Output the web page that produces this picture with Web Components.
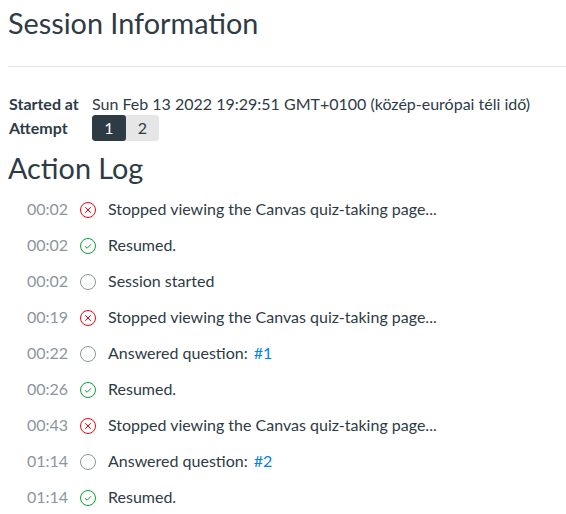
<!DOCTYPE html>
<html><head><meta charset="utf-8">
<style>
html,body{margin:0;background:#fff;overflow:hidden}
body{font-family:Lato,sans-serif;color:#2d3b45;height:514px}
</style></head><body>
<session-page>
<session-info slot="info" started="Sun Feb 13 2022 19:29:51 GMT+0100 (közép-európai téli idő)"></session-info>
<log-row time="00:02" kind="stop">Stopped viewing the Canvas quiz-taking page...</log-row>
<log-row time="00:02" kind="ok">Resumed.</log-row>
<log-row time="00:02" kind="none">Session started</log-row>
<log-row time="00:19" kind="stop">Stopped viewing the Canvas quiz-taking page...</log-row>
<log-row time="00:22" kind="none">Answered question: <a>#1</a></log-row>
<log-row time="00:26" kind="ok">Resumed.</log-row>
<log-row time="00:43" kind="stop">Stopped viewing the Canvas quiz-taking page...</log-row>
<log-row time="01:14" kind="none">Answered question: <a>#2</a></log-row>
<log-row time="01:14" kind="ok">Resumed.</log-row>
</session-page>
<script>
function def(name,html,init){customElements.define(name,class extends HTMLElement{connectedCallback(){if(this.shadowRoot)return;const r=this.attachShadow({mode:'open'});r.innerHTML=html;init&&init(this,r);}})}
def('session-page',`<style>
:host{display:block;padding-left:8px}
h1{margin:0;font:400 28.8px/34px Lato,sans-serif;padding-top:6px}
hr{border:0;height:1px;background:#dfe2e4;margin:26px 0 0}
h2{margin:0;font:400 28.8px/34px Lato,sans-serif;padding-top:10px}
.log{display:flex;flex-direction:column;padding-top:6px}
</style><h1>Session Information</h1><hr><slot name="info"></slot><h2>Action Log</h2><div class="log"><slot></slot></div>`);
def('session-info',`<style>
:host{display:grid;grid-template-columns:83px 1fr;padding-top:26px;font-size:16px;line-height:22px;margin-left:1px}
b{font-weight:700}
.tabs{display:flex;height:26px;width:67px;border-radius:3px;overflow:hidden;background:#e6e6e6;line-height:26px;text-align:center}
.tabs span{flex:1}
.tabs .on{flex:0 0 34px;background:#2d3b45;color:#fff;border-radius:3px}
.a{line-height:26px}
</style><b>Started at</b><span id="s"></span><b class="a">Attempt</b><div class="tabs"><span class="on">1</span><span>2</span></div>`,
(h,r)=>{r.getElementById('s').textContent=h.getAttribute('started')});
const icons={
stop:'<circle cx="9" cy="9" r="7.5" stroke="#ee0612"/><path d="M6.2 6.2l5.6 5.6M11.8 6.2l-5.6 5.6" stroke="#ee0612"/>',
ok:'<circle cx="9" cy="9" r="7.5" stroke="#0b9e3c"/><path d="M6 9.3l2.1 2 3.9-4" stroke="#0b9e3c"/>',
none:'<circle cx="9" cy="9" r="7.5" stroke="#8b969e"/>'};
def('log-row',`<style>
:host{display:flex;align-items:center;height:36px;font-size:16px;line-height:20px}
.t{width:60px;text-align:right;color:#8b969e;flex:none}
svg{flex:none;margin:1px 11px 0 11px;display:block;width:18px;height:18px;fill:none;stroke-width:1}
::slotted(a){color:#0081ed;margin-left:2px}
</style><span class="t" id="t"></span><svg viewBox="0 0 18 18" id="i"></svg><span><slot></slot></span>`,
(h,r)=>{r.getElementById('t').textContent=h.getAttribute('time');r.getElementById('i').innerHTML=icons[h.getAttribute('kind')]});
</script>
</body></html>
